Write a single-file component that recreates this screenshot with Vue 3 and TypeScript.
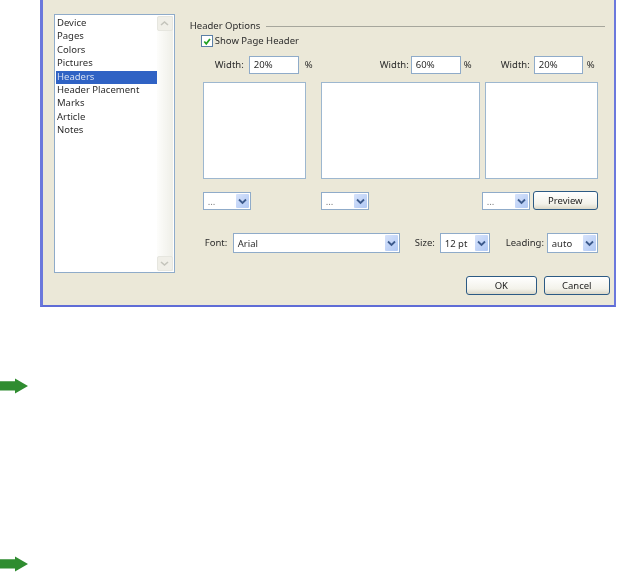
<script setup lang="ts">
const items: string[] = ['Device', 'Pages', 'Colors', 'Pictures', 'Headers', 'Header Placement', 'Marks', 'Article', 'Notes']
const widths = [
  { value: '20%', cls: 'w1' },
  { value: '60%', cls: 'w2' },
  { value: '20%', cls: 'w3' },
]
</script>

<template>
  <div class="page">
    <section class="dialog">
      <div class="list">
        <div class="rows">
          <div v-for="item in items" :key="item" class="row" :class="{ selected: item === 'Headers' }">{{ item }}</div>
        </div>
        <div class="scrollbar">
          <span class="sbtn">
            <svg width="9" height="7" viewBox="0 0 9 7"><path d="M1 5 L4.5 2 L8 5" fill="none" stroke="#c4c4bc" stroke-width="1.6" /></svg>
          </span>
          <span class="sbtn">
            <svg width="9" height="7" viewBox="0 0 9 7"><path d="M1 2 L4.5 5 L8 2" fill="none" stroke="#c4c4bc" stroke-width="1.6" /></svg>
          </span>
        </div>
      </div>

      <div class="main">
        <div class="legend"><span class="up">Header Options</span><i class="rule"></i></div>
        <label class="check">
          <span class="box">
            <svg width="11" height="11" viewBox="0 0 11 11"><path d="M2.5 5.5 L4.7 8 L8.8 2.8" fill="none" stroke="#21a121" stroke-width="2" /></svg>
          </span>
          <span class="up">Show Page Header</span>
        </label>

        <div class="width-row">
          <div v-for="w in widths" :key="w.cls" class="width-field" :class="w.cls">
            <span class="wlabel up">Width:</span>
            <span class="input">{{ w.value }}</span>
            <span class="pct up">%</span>
          </div>
        </div>

        <div class="areas">
          <div class="area a1"></div>
          <div class="area a2"></div>
          <div class="area a3"></div>
        </div>

        <div class="select-row">
          <div class="select s48">
            <span class="dots">...</span>
            <span class="drop"><svg width="9" height="7" viewBox="0 0 9 7"><path d="M1 1.5 L4.5 5 L8 1.5" fill="none" stroke="#3c5a8c" stroke-width="1.8" /></svg></span>
          </div>
          <div class="select s48 second">
            <span class="dots">...</span>
            <span class="drop"><svg width="9" height="7" viewBox="0 0 9 7"><path d="M1 1.5 L4.5 5 L8 1.5" fill="none" stroke="#3c5a8c" stroke-width="1.8" /></svg></span>
          </div>
          <div class="select s48 third">
            <span class="dots">...</span>
            <span class="drop"><svg width="9" height="7" viewBox="0 0 9 7"><path d="M1 1.5 L4.5 5 L8 1.5" fill="none" stroke="#3c5a8c" stroke-width="1.8" /></svg></span>
          </div>
          <button class="btn preview">Preview</button>
        </div>

        <div class="font-row">
          <span class="lbl-font up">Font:</span>
          <div class="select font">
            <span>Arial</span>
            <span class="drop"><svg width="9" height="7" viewBox="0 0 9 7"><path d="M1 1.5 L4.5 5 L8 1.5" fill="none" stroke="#3c5a8c" stroke-width="1.8" /></svg></span>
          </div>
          <span class="lbl-size up">Size:</span>
          <div class="select size">
            <span>12 pt</span>
            <span class="drop"><svg width="9" height="7" viewBox="0 0 9 7"><path d="M1 1.5 L4.5 5 L8 1.5" fill="none" stroke="#3c5a8c" stroke-width="1.8" /></svg></span>
          </div>
          <span class="lbl-lead up">Leading:</span>
          <div class="select lead">
            <span>auto</span>
            <span class="drop"><svg width="9" height="7" viewBox="0 0 9 7"><path d="M1 1.5 L4.5 5 L8 1.5" fill="none" stroke="#3c5a8c" stroke-width="1.8" /></svg></span>
          </div>
        </div>

        <div class="actions">
          <button class="btn ok">OK</button>
          <button class="btn cancel">Cancel</button>
        </div>
      </div>
    </section>

    <svg class="arrow first" width="28" height="16" viewBox="0 0 28 16"><path d="M0 3.2 H15 V0.5 L28 8 L15 15.5 V12.4 H0 Z" fill="#2f8c30" /></svg>
    <svg class="arrow second-arrow" width="28" height="16" viewBox="0 0 28 16"><path d="M0 3.2 H15 V0.5 L28 8 L15 15.5 V12.4 H0 Z" fill="#2f8c30" /></svg>
  </div>
</template>

<style>
html, body { margin: 0; background: #fff; }
</style>

<style scoped>
.page {
  width: 617px;
  height: 585px;
  overflow: hidden;
  background: #fff;
  font-family: "Noto Sans", sans-serif;
  font-size: 9.5px;
  color: #2c2c2c;
}
.up { margin-bottom: 2px; }
.dialog {
  box-sizing: border-box;
  margin-left: 40px;
  width: 576px;
  height: 307px;
  display: flex;
  background: #ebe8d8;
  border-left: 3px solid #6b78dc;
  border-right: 2px solid #6b78dc;
  border-bottom: 2px solid #5f6cd6;
  padding: 14px 0 0 11px;
  filter: blur(0.3px);
}
.list {
  box-sizing: border-box;
  width: 121px;
  height: 259px;
  display: flex;
  background: #fff;
  border: 1px solid #8fabc9;
  padding: 1px;
}
.rows { flex: 1; padding-top: 1px; }
.row {
  height: 13.4px;
  line-height: 11.4px;
  padding-left: 1px;
  white-space: nowrap;
}
.row.selected { background: #2f62c4; color: #d4def2; }
.scrollbar {
  width: 16px;
  display: flex;
  flex-direction: column;
  justify-content: space-between;
  background: linear-gradient(90deg, #fdfdfb, #efefe8);
}
.sbtn {
  height: 15px;
  display: flex;
  align-items: center;
  justify-content: center;
  background: #f0efe8;
  border: 1px solid #e6e6df;
  border-radius: 2px;
  box-sizing: border-box;
}
.main { width: 425px; margin-left: 15px; display: flex; flex-direction: column; }
.legend { display: flex; align-items: center; height: 12px; gap: 6px; white-space: nowrap; width: 415px; margin-top: 6px; }
.rule { flex: 1; height: 1px; background: #a6a69c; }
.check { display: flex; align-items: center; gap: 2px; margin: 3px 0 0 11px; height: 12px; }
.box {
  box-sizing: border-box;
  width: 12px;
  height: 12px;
  background: #fff;
  border: 1px solid #5b7fa6;
  display: flex;
  align-items: center;
  justify-content: center;
}
.width-row { display: flex; margin-top: 9px; height: 18px; }
.width-field { display: flex; align-items: center; }
.wlabel { width: 28px; white-space: nowrap; }
.w1 { margin-left: 25px; }
.w2 { margin-left: 69px; }
.w3 { margin-left: 31px; }
.input {
  box-sizing: border-box;
  width: 50px;
  height: 18px;
  line-height: 16px;
  background: #fff;
  border: 1px solid #8fabc9;
  padding-left: 4px;
  margin-left: 6px;
}
.w2 .input { margin-left: 3px; }
.w3 .input { margin-left: 5px; width: 49px; }
.pct { margin-left: 6px; width: 6px; }
.w2 .pct { margin-left: 3px; }
.w3 .pct { margin-left: 4px; }
.areas { display: flex; margin: 8px 0 0 13px; height: 97px; }
.area { box-sizing: border-box; height: 97px; background: #fff; border: 1px solid #9db7cf; }
.a1 { width: 103px; }
.a2 { width: 159px; margin-left: 15px; }
.a3 { width: 113px; margin-left: 5px; }
.select-row { display: flex; align-items: flex-start; margin: 12px 0 0 13px; height: 19px; }
.select {
  box-sizing: border-box;
  height: 18px;
  background: #fff;
  border: 1px solid #8fabc9;
  display: flex;
  align-items: center;
  justify-content: space-between;
  padding: 1px 1px 1px 4px;
  white-space: nowrap;
}
.select-row .select { margin-top: 1px; }
.s48 { width: 48px; }
.second { margin-left: 70px; }
.third { margin-left: 113px; }
.dots { color: #777; }
.drop {
  width: 13px;
  align-self: stretch;
  display: flex;
  align-items: center;
  justify-content: center;
  background: linear-gradient(135deg, #d7e3fb, #b0c8f4);
  border-radius: 1px;
}
.btn {
  box-sizing: border-box;
  font: inherit;
  color: #222;
  padding: 0;
  background: linear-gradient(#fff, #f3f2ea 70%, #dcd8c8);
  border: 1px solid #2c5a84;
  border-radius: 3px;
  height: 19px;
}
.preview { width: 65px; margin-left: 3px; }
.font-row { display: flex; align-items: center; margin: 23px 0 0 0; height: 20px; white-space: nowrap; }
.font-row .select { height: 20px; }
.lbl-font { margin-left: 15px; width: 23px; }
.font { width: 167px; margin-left: 5px; }
.lbl-size { margin-left: 15px; width: 20px; }
.size { width: 50px; margin-left: 5px; }
.lbl-lead { margin-left: 16px; width: 36px; }
.lead { width: 51px; margin-left: 5px; }
.actions { display: flex; margin: 23px 0 0 276px; gap: 7px; }
.ok { width: 71px; }
.cancel { width: 66px; }
.arrow { display: block; filter: blur(0.3px); }
.first { margin-top: 71px; }
.second-arrow { margin-top: 162px; }
</style>
